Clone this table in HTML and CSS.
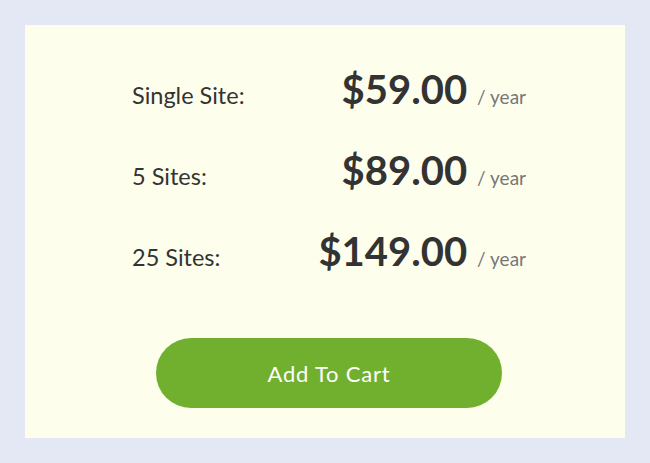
FILE: index.html
```html
<!DOCTYPE html>
<html>
<head>
<meta charset="utf-8">
<link rel="stylesheet" href="styles.css">
</head>
<body>
<div class="card">
  <div class="rows">
    <div class="row">
      <span class="label">Single Site:</span>
      <span class="price"><span class="amount">$59.00</span><span class="per">/ year</span></span>
    </div>
    <div class="row">
      <span class="label">5 Sites:</span>
      <span class="price"><span class="amount">$89.00</span><span class="per">/ year</span></span>
    </div>
    <div class="row">
      <span class="label">25 Sites:</span>
      <span class="price"><span class="amount">$149.00</span><span class="per">/ year</span></span>
    </div>
  </div>
  <button class="cart">Add To Cart</button>
</div>
</body>
</html>
```
FILE: styles.css
```css
html, body {
  margin: 0;
  padding: 0;
}
body {
  background: #e4e8f4;
  font-family: Lato, "Open Sans", sans-serif;
  padding: 25px;
  width: 600px;
}
.card {
  background: #fefeec;
  height: 413px;
  display: flex;
  flex-direction: column;
  align-items: center;
  box-sizing: border-box;
  padding-top: 40px;
}
.rows {
  width: 394px;
  margin-left: 8px;
  display: flex;
  flex-direction: column;
}
.row {
  display: flex;
  justify-content: space-between;
  align-items: baseline;
  height: 81px;
}
.label {
  font-size: 23.5px;
  color: #333;
}
.price {
  display: flex;
  align-items: baseline;
}
.amount {
  font-size: 40px;
  font-weight: 700;
  color: #333;
}
.per {
  font-size: 19px;
  color: #777;
  margin-left: 10px;
}
.cart {
  margin-top: 30px;
  margin-left: 8px;
  width: 346px;
  height: 70px;
  border: none;
  border-radius: 35px;
  background: #71b02f;
  color: #fff;
  font-family: Lato, "Open Sans", sans-serif;
  font-size: 22px;
  letter-spacing: 0.8px;
  cursor: pointer;
}
```
